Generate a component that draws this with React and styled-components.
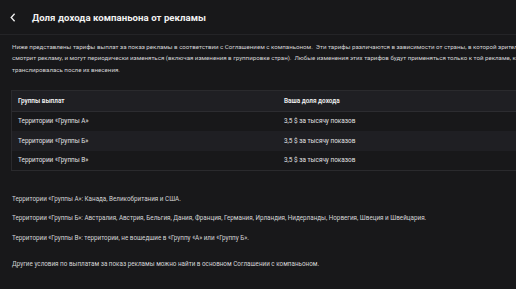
import styled, { createGlobalStyle } from 'styled-components';

const GlobalStyle = createGlobalStyle`
    html, body {
        margin: 0;
        padding: 0;
        background: #18181a;
        overflow: hidden;
    }
    body {
        font-family: Roboto, "Liberation Sans", Arial, sans-serif;
        color: #d4d4d6;
    }
`;

const Page = styled.div`
    width: 516px;
    height: 289px;
    overflow: hidden;
    background: #18181a;
`;
const Header = styled.header`
    display: flex;
    align-items: center;
    height: 35px;
    padding: 0 0 0 8px;
    border-bottom: 1px solid #242427;
    box-sizing: border-box;
`;
const Back = styled.button`
    display: flex;
    align-items: center;
    justify-content: center;
    width: 10px;
    height: 12px;
    padding: 0;
    margin-right: 14px;
    border: none;
    background: none;
    color: #f1f1f1;
`;
const Title = styled.h1`
    margin: 0;
    font-size: 9.6px;
    font-weight: 700;
    color: #f1f1f1;
    letter-spacing: 0.05px;
`;
const Content = styled.div`
    width: 600px;
    padding: 6.5px 12px 0 12px;
`;
const Intro = styled.p`
    margin: 0;
    font-size: 6.15px;
    line-height: 11.5px;
    white-space: nowrap;
`;
const Table = styled.div`
    margin: 14px 0 0 -1px;
    border: 1px solid #2a2a2d;
    border-right: none;
`;
const Row = styled.div`
    display: grid;
    grid-template-columns: 266px 1fr;
    box-sizing: border-box;
    height: ${p => p.$head ? '20.5px' : '19.6px'};
    align-items: center;
    background: ${p => p.$shade ? '#1f1f23' : '#18181a'};
    border-bottom: ${p => p.$head ? '1px solid #2c2c30' : 'none'};
    font-size: 6.4px;
    font-weight: ${p => p.$head ? 600 : 400};
    color: ${p => p.$head ? '#f1f1f1' : '#e0e0e2'};
`;
const Cell = styled.div`
    padding-left: 6px;
`;
const Note = styled.p`
    margin: ${p => p.$gap} 0 0 0;
    font-size: 6.3px;
    line-height: 8px;
    white-space: nowrap;
`;

const rows = [
    ['Территории «Группы А»', '3,5 $ за тысячу показов'],
    ['Территории «Группы Б»', '3,5 $ за тысячу показов'],
    ['Территории «Группы В»', '3,5 $ за тысячу показов'],
];

const App = () => {
    return (
        <Page>
            <GlobalStyle/>
            <Header>
                <Back aria-label="Назад">
                    <svg width="6" height="9" viewBox="0 0 6 9" fill="none">
                        <path d="M4.6 0.8 L1.2 4.5 L4.6 8.2" stroke="#f1f1f1" strokeWidth="1.3"/>
                    </svg>
                </Back>
                <Title>Доля дохода компаньона от рекламы</Title>
            </Header>
            <Content>
                <Intro>
                    Ниже представлены тарифы выплат за показ рекламы в соответствии с Соглашением с компаньоном.&nbsp; Эти тарифы различаются в зависимости от страны, в которой зритель<br/>
                    смотрит рекламу, и могут периодически изменяться (включая изменения в группировке стран).&nbsp; Любые изменения этих тарифов будут применяться только к той рекламе, которая<br/>
                    транслировалась после их внесения.
                </Intro>
                <Table>
                    <Row $head $shade>
                        <Cell>Группы выплат</Cell>
                        <Cell>Ваша доля дохода</Cell>
                    </Row>
                    {rows.map((r, i) => (
                        <Row key={r[0]} $shade={i === 1}>
                            <Cell>{r[0]}</Cell>
                            <Cell>{r[1]}</Cell>
                        </Row>
                    ))}
                </Table>
                <Note $gap="23.5px">Территории «Группы А»: Канада, Великобритания и США.</Note>
                <Note $gap="11.4px">Территории «Группы Б»: Австралия, Австрия, Бельгия, Дания, Франция, Германия, Ирландия, Нидерланды, Норвегия, Швеция и Швейцария.</Note>
                <Note $gap="11.4px">Территории «Группы В»: территории, не вошедшие в «Группу «А» или «Группу Б».</Note>
                <Note $gap="18.7px">Другие условия по выплатам за показ рекламы можно найти в основном Соглашении с компаньоном.</Note>
            </Content>
        </Page>
    )
}

export default App
